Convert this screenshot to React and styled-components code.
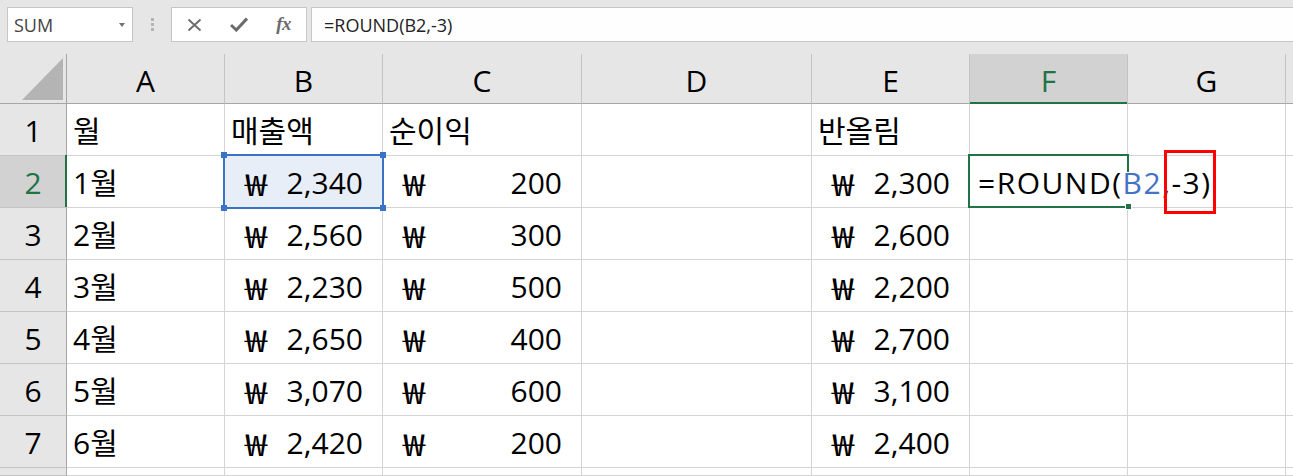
import React from 'react';
import styled, { createGlobalStyle, css } from 'styled-components';

const GlobalStyle = createGlobalStyle`
  html, body { margin: 0; padding: 0; background: #fff; overflow: hidden; }
  body { font-family: "Open Sans", "Noto Sans CJK KR", sans-serif; }
`;

const GREEN = '#217346';
const BLUE = '#3a72c6';

const Page = styled.div`
  width: 1293px;
  height: 476px;
  overflow: hidden;
  background: #fff;
`;

const Toolbar = styled.div`
  height: 54px;
  box-sizing: border-box;
  background: #e6e6e6;
  display: flex;
  align-items: flex-start;
  padding: 7px 0 0 7px;
  font-family: "Open Sans", sans-serif;
`;

const NameBox = styled.div`
  width: 126px;
  height: 35px;
  box-sizing: border-box;
  background: #fff;
  border: 1px solid #c6c6c6;
  display: flex;
  align-items: center;
  justify-content: space-between;
  padding: 0 7px 0 6px;
  font-size: 18px;
  color: #444;
`;

const Caret = styled.span`
  width: 0;
  height: 0;
  border-left: 3.5px solid transparent;
  border-right: 3.5px solid transparent;
  border-top: 4px solid #707070;
  margin-top: 1px;
`;

const Grip = styled.div`
  width: 38px;
  height: 35px;
  display: flex;
  flex-direction: column;
  align-items: center;
  justify-content: center;
  gap: 2px;
`;

const GripDot = styled.span`
  width: 3px;
  height: 3px;
  background: #b4b4b4;
`;

const FxBox = styled.div`
  width: 136px;
  height: 35px;
  box-sizing: border-box;
  background: #fff;
  border: 1px solid #c6c6c6;
  display: flex;
`;

const FxButton = styled.div`
  flex: 1;
  display: flex;
  align-items: center;
  justify-content: center;
  color: #6b6b6b;
`;

const FxText = styled.i`
  font-family: "Liberation Serif", serif;
  font-size: 19px;
  font-weight: bold;
  color: #6b6b6b;
  letter-spacing: -0.5px;
  margin-top: -1px;
`;

const FormulaInput = styled.div`
  flex: 1;
  height: 35px;
  margin-left: 4px;
  box-sizing: border-box;
  background: #fefefe;
  border: 1px solid #c6c6c6;
  border-right: none;
  display: flex;
  align-items: center;
  padding-left: 12px;
  font-size: 18px;
  color: #222;
`;

const COLS = [67, 158, 158, 199, 230, 158, 158, 158];

const Sheet = styled.div`
  display: grid;
  grid-template-columns: ${COLS.map((c) => c + 'px').join(' ')} 1fr;
  grid-template-rows: 50px repeat(7, 52px) 1fr;
  height: 422px;
  font-family: "Open Sans", "Noto Sans CJK KR", sans-serif;
  font-size: 30px;
  line-height: 30px;
`;

const HeadBase = css`
  position: relative;
  box-sizing: border-box;
  display: flex;
  align-items: center;
  justify-content: center;
  white-space: nowrap;
  background: ${(p) => (p.$active ? '#d2d2d2' : '#e6e6e6')};
  color: ${(p) => (p.$active ? GREEN : '#000')};
`;

const Corner = styled.div`
  ${HeadBase};
  border-right: 1px solid #a6a6a6;
  border-bottom: 1px solid #a6a6a6;
`;

const ColHead = styled.div`
  ${HeadBase};
  padding-top: 4px;
  border-right: 1px solid #c4c4c4;
  border-bottom: 1px solid #a6a6a6;
  ${(p) =>
    p.$active &&
    css`
      &::after {
        content: '';
        position: absolute;
        left: 0;
        right: 0;
        bottom: -1px;
        height: 2px;
        background: ${GREEN};
      }
    `}
`;

const RowHead = styled.div`
  ${HeadBase};
  padding-top: 2px;
  border-right: 1px solid #a6a6a6;
  border-bottom: 1px solid #c4c4c4;
  ${(p) =>
    p.$active &&
    css`
      &::after {
        content: '';
        position: absolute;
        top: -1px;
        bottom: 0;
        right: -1px;
        width: 2px;
        background: ${GREEN};
      }
    `}
`;

const Cell = styled.div`
  position: relative;
  box-sizing: border-box;
  border-right: 1px solid ${(p) => (p.$noRight ? 'transparent' : '#d4d4d4')};
  border-bottom: 1px solid #d4d4d4;
  display: flex;
  align-items: center;
  padding: 2px 6px 0;
  white-space: nowrap;
  color: #000;
  background: ${(p) => (p.$selected ? '#e8eef8' : '#fff')};
`;

const AcctCell = styled(Cell)`
  justify-content: space-between;
  padding: 2px 19px 0 20px;
`;

const WonSign = styled.span`
  font-family: "Noto Sans CJK KR", sans-serif;
  font-size: 30px;
  display: inline-block;
  transform: scaleX(1.32);
  transform-origin: left center;
`;

const BlueFrame = styled.div`
  position: absolute;
  top: -2px;
  left: -2px;
  right: -2px;
  bottom: -2px;
  border: 2px solid ${BLUE};
  z-index: 2;
  pointer-events: none;
`;

const Handle = styled.span`
  position: absolute;
  width: 6px;
  height: 6px;
  background: ${BLUE};
  ${(p) => (p.$top ? 'top: -4px;' : 'bottom: -4px;')}
  ${(p) => (p.$left ? 'left: -4px;' : 'right: -4px;')}
`;

const GreenFrame = styled.div`
  position: absolute;
  top: -2px;
  left: -2px;
  right: -1px;
  bottom: -1px;
  border: 2px solid ${GREEN};
  border-right: none;
  z-index: 2;
  pointer-events: none;
  &::before {
    content: '';
    position: absolute;
    right: -1px;
    top: -2px;
    width: 2px;
    height: 18px;
    background: ${GREEN};
  }
`;

const FillHandle = styled.span`
  position: absolute;
  right: -4px;
  bottom: -4px;
  width: 5px;
  height: 5px;
  background: ${GREEN};
  border: 1px solid #fff;
`;

const FormulaText = styled.span`
  position: relative;
  z-index: 3;
  letter-spacing: 1.5px;
  padding-left: 2px;
`;

const RefPart = styled.span`
  color: #4472c4;
`;

const Marked = styled.span`
  position: relative;
  &::after {
    content: '';
    position: absolute;
    left: -7px;
    right: -4px;
    top: -12px;
    bottom: -11px;
    border: 3px solid #ff0000;
  }
`;

const CornerTriangle = () => (
  <svg width="67" height="49" viewBox="0 0 67 49" style={{ position: 'absolute', left: 0, top: 0 }}>
    <polygon points="63,4 63,46 22,46" fill="#b4b4b4" />
  </svg>
);

const XIcon = () => (
  <svg width="15" height="14" viewBox="0 0 15 14">
    <path d="M1.5 1.5 L13.5 12.5 M13.5 1.5 L1.5 12.5" stroke="#6b6b6b" strokeWidth="1.9" fill="none" />
  </svg>
);

const CheckIcon = () => (
  <svg width="18" height="15" viewBox="0 0 18 15">
    <path d="M1 8 L6.3 13 L17 1.5" stroke="#6b6b6b" strokeWidth="3" fill="none" />
  </svg>
);

const LETTERS = ['A', 'B', 'C', 'D', 'E', 'F', 'G', ''];

const DATA = [
  ['1월', '2,340', '200', '2,300'],
  ['2월', '2,560', '300', '2,600'],
  ['3월', '2,230', '500', '2,200'],
  ['4월', '2,650', '400', '2,700'],
  ['5월', '3,070', '600', '3,100'],
  ['6월', '2,420', '200', '2,400'],
];

const Won = ({ v }) => (
  <>
    <WonSign>₩</WonSign>
    <span>{v}</span>
  </>
);

export default function App() {
  return (
    <Page>
      <GlobalStyle />
      <Toolbar>
        <NameBox>
          <span>SUM</span>
          <Caret />
        </NameBox>
        <Grip>
          <GripDot />
          <GripDot />
          <GripDot />
        </Grip>
        <FxBox>
          <FxButton>
            <XIcon />
          </FxButton>
          <FxButton>
            <CheckIcon />
          </FxButton>
          <FxButton>
            <FxText>fx</FxText>
          </FxButton>
        </FxBox>
        <FormulaInput>=ROUND(B2,-3)</FormulaInput>
      </Toolbar>
      <Sheet>
        <Corner>
          <CornerTriangle />
        </Corner>
        {LETTERS.map((l, i) => (
          <ColHead key={'h' + i} $active={l === 'F'}>
            {l}
          </ColHead>
        ))}

        <RowHead>1</RowHead>
        <Cell>월</Cell>
        <Cell>매출액</Cell>
        <Cell>순이익</Cell>
        <Cell />
        <Cell>반올림</Cell>
        <Cell />
        <Cell />
        <Cell />

        {DATA.map((r, i) => {
          const rowNo = i + 2;
          const first = i === 0;
          return (
            <React.Fragment key={rowNo}>
              <RowHead $active={first}>{rowNo}</RowHead>
              <Cell>{r[0]}</Cell>
              <AcctCell $selected={first}>
                <Won v={r[1]} />
                {first && (
                  <BlueFrame>
                    <Handle $top $left />
                    <Handle $top />
                    <Handle $left />
                    <Handle />
                  </BlueFrame>
                )}
              </AcctCell>
              <AcctCell>
                <Won v={r[2]} />
              </AcctCell>
              <Cell />
              <AcctCell>
                <Won v={r[3]} />
              </AcctCell>
              {first ? (
                <Cell $noRight>
                  <FormulaText>
                    =ROUND(<RefPart>B2</RefPart>,<Marked>-3)</Marked>
                  </FormulaText>
                  <GreenFrame>
                    <FillHandle />
                  </GreenFrame>
                </Cell>
              ) : (
                <Cell />
              )}
              <Cell />
              <Cell />
            </React.Fragment>
          );
        })}

        <RowHead />
        {LETTERS.map((l, i) => (
          <Cell key={'r8' + i} />
        ))}
      </Sheet>
    </Page>
  );
}
